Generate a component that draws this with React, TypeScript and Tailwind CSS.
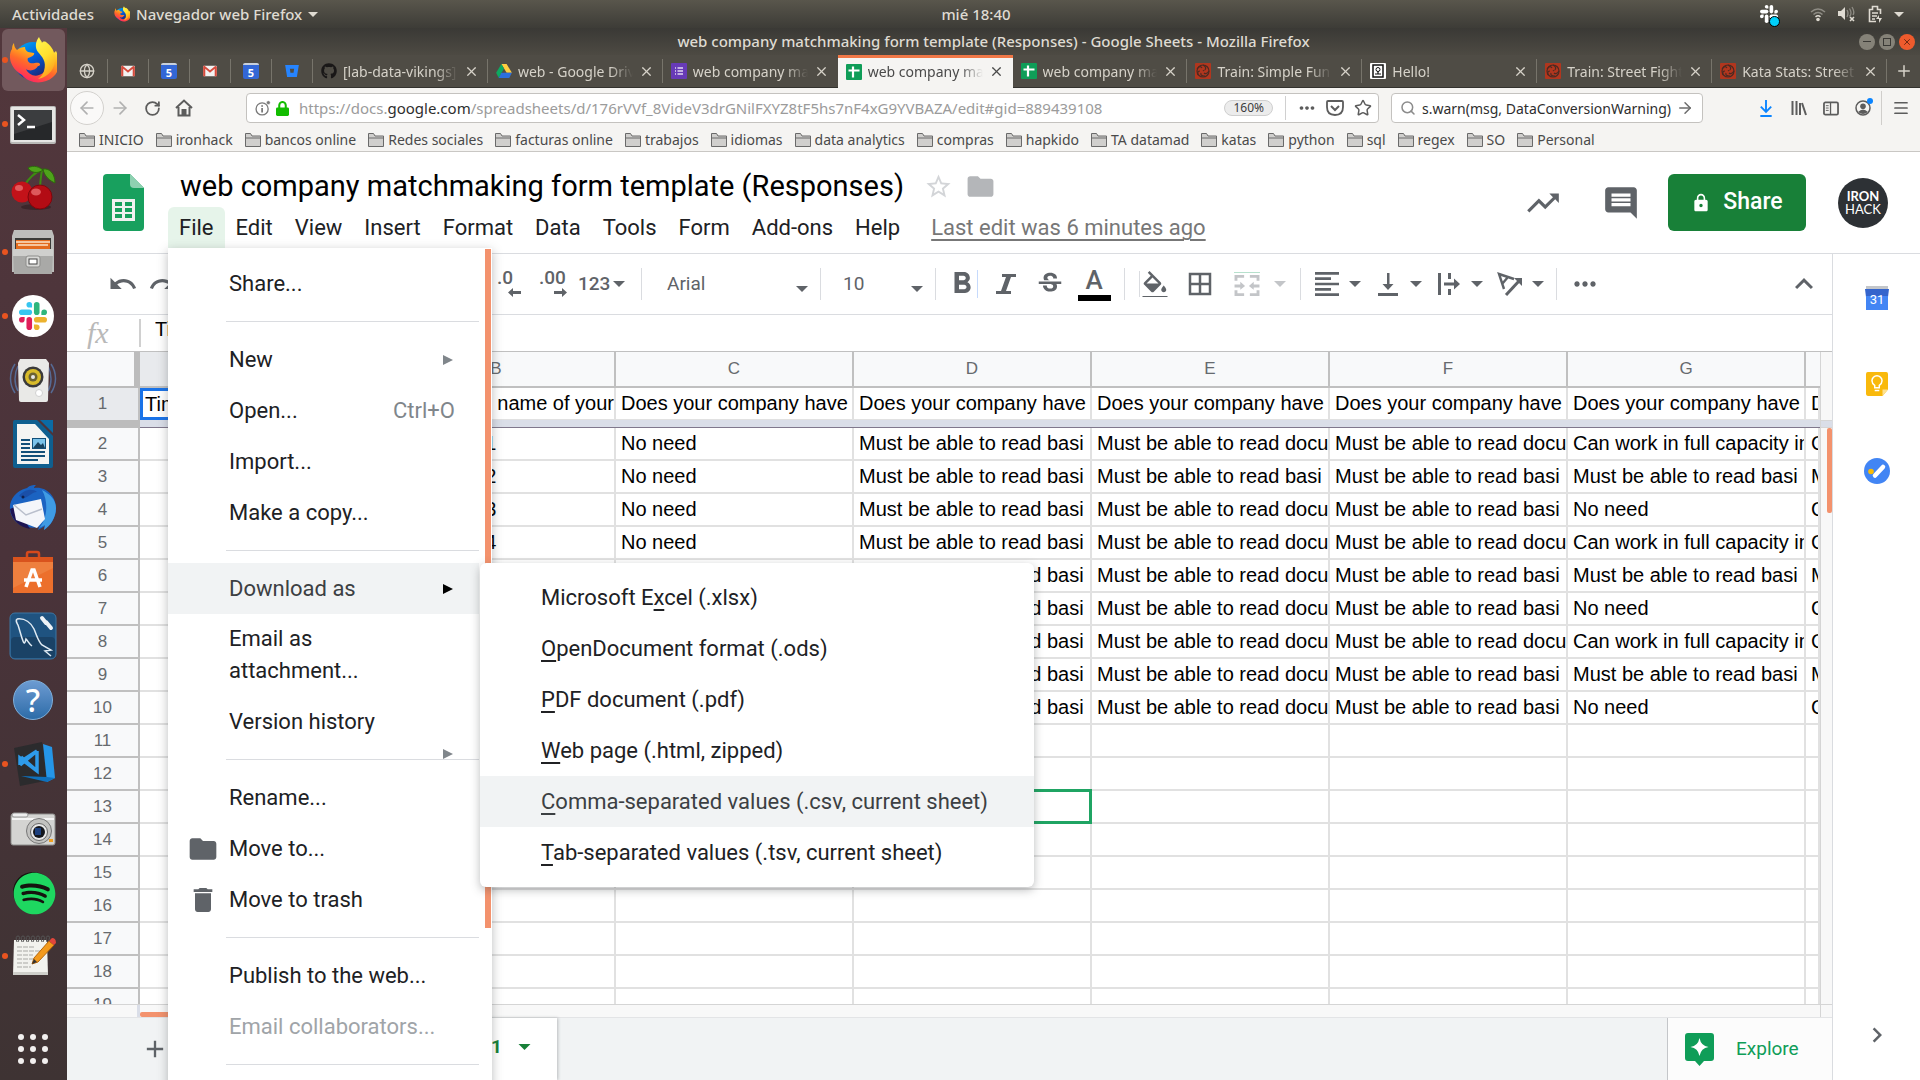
import React, { ReactNode } from "react";
import { ArrowLeft, ArrowRight, RotateCw, Search, Star, X, Plus, Globe, Menu } from "lucide-react";
import {
  MdUndo, MdRedo, MdFormatBold, MdStrikethroughS, MdFormatColorFill, MdBorderAll, MdFormatAlignLeft,
  MdMoreHoriz, MdKeyboardArrowUp, MdKeyboardArrowRight, MdFolder, MdDelete,
  MdStarBorder, MdTrendingUp, MdInsertComment, MdLock, MdAdd,
} from "react-icons/md";
import { FaGithub, FaSpotify } from "react-icons/fa";

const UI = "font-['Noto_Sans',sans-serif]";

/* ---------- logos ---------- */

function FirefoxLogo({ className }: { className: string }) {
  return (
    <svg viewBox="0 0 48 48" className={className} aria-hidden="true">
      <defs>
        <linearGradient id="ffFlame" x1="0.75" y1="0" x2="0.2" y2="1">
          <stop offset="0" stopColor="#fff44f" />
          <stop offset="0.3" stopColor="#ffb31c" />
          <stop offset="0.55" stopColor="#ff6a2a" />
          <stop offset="0.85" stopColor="#ff3255" />
          <stop offset="1" stopColor="#e31587" />
        </linearGradient>
        <linearGradient id="ffBlue" x1="0" y1="0" x2="0.6" y2="1">
          <stop offset="0" stopColor="#00b3f4" />
          <stop offset="0.5" stopColor="#0060df" />
          <stop offset="1" stopColor="#20246e" />
        </linearGradient>
        <linearGradient id="ffTail" x1="0.2" y1="0" x2="0.6" y2="1">
          <stop offset="0" stopColor="#fff44f" />
          <stop offset="0.5" stopColor="#ffe02e" />
          <stop offset="1" stopColor="#ff9a1c" />
        </linearGradient>
      </defs>
      <circle cx="24" cy="25" r="19" fill="url(#ffBlue)" />
      <path d="M5 7c0 3 1 5 3 7 2-2 5-3 8-3 0 2 1 4 3 5l6 1c1 2-3 4-6 5-1 2 0 4 2 5 4 1 6-1 9 0 2 1 1 3-1 3-2 4-8 6-12 3 2 5 8 8 13 6 7-2 10-9 8-16l9-8c5 10 4 20-3 26-9 8-24 7-31-2C0 31-1 19 3 13c0-3 1-5 2-6z" fill="url(#ffFlame)" />
      <path d="M30 1c-4 5-4 11-1 15 4 5 9 9 6 19-1 3-3 6-6 8 11-2 18-11 17-22-1-8-5-12-9-15-2-1-4 0-4 1 0-2-2-3-3-6z" fill="url(#ffTail)" />
    </svg>
  );
}

function SlackMark({ className, mono }: { className: string; mono?: boolean }) {
  const c = mono ? ["#fff", "#fff", "#fff", "#fff"] : ["#36c5f0", "#2eb67d", "#ecb22e", "#e01e5a"];
  return (
    <svg viewBox="0 0 30 30" className={className} aria-hidden="true">
      <g fill={c[0]}><rect x="0" y="8" width="14" height="6" rx="3" /><path d="M14 6V3a3 3 0 1 0-3 3z" /></g>
      <g fill={c[1]}><rect x="16" y="0" width="6" height="14" rx="3" /><path d="M24 14h3a3 3 0 1 0-3-3z" /></g>
      <g fill={c[2]}><rect x="16" y="16" width="14" height="6" rx="3" /><path d="M16 24v3a3 3 0 1 0 3-3z" /></g>
      <g fill={c[3]}><rect x="8" y="16" width="6" height="14" rx="3" /><path d="M6 16H3a3 3 0 1 0 3 3z" /></g>
    </svg>
  );
}

const dockIcons: { name: string; running?: boolean; active?: boolean; icon: ReactNode }[] = [
  { name: "Firefox", running: true, active: true, icon: <FirefoxLogo className="size-12" /> },
  {
    name: "Terminal", running: true,
    icon: (
      <svg viewBox="0 0 48 48" className="size-12">
        <rect x="1" y="6" width="46" height="38" rx="2" fill="#b9b9b7" />
        <rect x="2" y="7" width="44" height="35" rx="1" fill="#e6e6e4" />
        <rect x="5" y="10" width="38" height="30" fill="#26282a" />
        <path d="M5 10h38v12L5 34z" fill="#3b3d3f" />
        <path d="M9 15l6 5-6 5M18 27h8" stroke="#fff" strokeWidth="2.5" fill="none" />
      </svg>
    ),
  },
  {
    name: "CherryTree",
    icon: (
      <svg viewBox="0 0 48 48" className="size-12">
        <ellipse cx="27" cy="43" rx="15" ry="3" fill="#2e1c20" opacity=".6" />
        <path d="M15 22C20 14 25 9 32 6M31 26c0-8 1-14 2-20" stroke="#3d8a12" strokeWidth="2" fill="none" />
        <path d="M34 6C28 1 22 2 19 4c3 5 10 6 15 2zM34 5c7-1 12 5 12 14-5-2-11-7-12-14z" fill="#4ea31a" stroke="#2d6b0b" />
        <circle cx="13" cy="28" r="10.500" fill="#c31219" />
        <circle cx="31" cy="33" r="12" fill="#b30c14" stroke="#7f060c" />
        <ellipse cx="10" cy="24" rx="4" ry="3" fill="#f07a7a" opacity=".7" />
        <ellipse cx="27" cy="28" rx="5" ry="3.500" fill="#f07a7a" opacity=".7" />
      </svg>
    ),
  },
  {
    name: "Files", running: true,
    icon: (
      <svg viewBox="0 0 48 48" className="size-12">
        <path d="M5 2h38l2 6v36H3V8z" fill="#bdbdbb" />
        <rect x="6" y="10" width="36" height="12" fill="#3a3a38" />
        <path d="M7 12h34v10H7z" fill="#e36b1e" />
        <path d="M7 14h34M9 17h30" stroke="#fbe3c8" strokeWidth="1.500" />
        <path d="M4 21h40l-1 25H5z" fill="#a9a9a7" />
        <path d="M4 21h40v7H4z" fill="#cfcfcd" />
        <rect x="17" y="28" width="14" height="11" rx="2" fill="#d8d8d6" stroke="#8d8d8b" />
        <rect x="20" y="31" width="8" height="5" fill="#fff" stroke="#444" />
      </svg>
    ),
  },
  {
    name: "Slack", running: true,
    icon: <span className="grid size-[42px] place-items-center rounded-full bg-white"><SlackMark className="size-7" /></span>,
  },
  {
    name: "Rhythmbox",
    icon: (
      <svg viewBox="0 0 48 48" className="size-12">
        <path d="M6 8c-6 9-6 20 0 29M42 8c6 9 6 20 0 29M9 10c-4 8-4 18 0 25M39 10c4 8 4 18 0 25" stroke="#566a94" strokeWidth="1.500" fill="none" />
        <path d="M11 3h26l3 4-1 37q0 2-2 2H12q-2 0-2-2L9 7z" fill="#e9e9e7" />
        <circle cx="24" cy="21" r="10.500" fill="#3a3a3a" />
        <circle cx="24" cy="21" r="8" fill="#d8bb2a" />
        <circle cx="24" cy="21" r="4.500" fill="#6b6232" />
        <circle cx="24" cy="21" r="2" fill="#e8e8e8" />
        <circle cx="30" cy="37" r="3.500" fill="#fff" stroke="#d0d0d0" />
      </svg>
    ),
  },
  {
    name: "LibreOffice Writer",
    icon: (
      <svg viewBox="0 0 48 48" className="size-12">
        <path d="M6 0h22l16 16v30q0 2-2 2H6q-2 0-2-2V2q0-2 2-2z" fill="#0f5f8f" />
        <path d="M8 4h18l14 15v25H8z" fill="#f4f4f2" />
        <path d="M31 0h13v13z" fill="#0b6ba5" />
        <path d="M12 20h9M12 24h9M12 28h9M12 32h24M12 36h24M12 40h17" stroke="#134f78" strokeWidth="2" />
        <rect x="23" y="18" width="14" height="11" fill="#134f78" />
        <rect x="24" y="19" width="12" height="9" fill="#7cc3ea" />
        <path d="M24 28l5-6 3 3 2-2 2 5z" fill="#19425e" />
      </svg>
    ),
  },
  {
    name: "Thunderbird",
    icon: (
      <svg viewBox="0 0 48 48" className="size-12">
        <path d="M18 4c3-3 6-3 9-3-1 1-2 2-2 3 12-2 22 8 22 20 0 10-6 18-12 22l1-4-7 4 1-3C14 46 2 38 1 25 0 17 6 7 18 4z" fill="#1b63c2" />
        <path d="M33 6c8 4 14 10 14 18 0 10-6 18-12 22l1-5-6 3c8-8 10-26 3-38z" fill="#3f9be4" />
        <path d="M1 25c2 12 10 18 20 20L8 22z" fill="#1d1454" />
        <path d="M4 21l28-6 4 20-8 9L7 36z" fill="#f4f6fa" />
        <path d="M5 21l12 10 16-6" stroke="#b9bfcc" strokeWidth="1.500" fill="none" />
        <path d="M10 12c5-7 14-8 18-4-6 0-8 6-14 6z" fill="#1a4fa8" />
        <circle cx="14" cy="13" r="1.500" fill="#10204c" />
      </svg>
    ),
  },
  {
    name: "Ubuntu Software",
    icon: (
      <svg viewBox="0 0 48 48" className="size-12">
        <path d="M18 13V6q0-2 2-2h8q2 0 2 2v7" stroke="#d6491c" strokeWidth="2.500" fill="none" />
        <path d="M4 9h40v36H4z" fill="#ec6f2c" />
        <path d="M4 9h40v5H4z" fill="#d9531d" />
        <path d="M4 14h40v6L4 40z" fill="#f08a4b" opacity=".6" />
        <path d="M17 39l6-17h2l6 17M15 32h18" stroke="#fff" strokeWidth="3.500" fill="none" />
      </svg>
    ),
  },
  {
    name: "MySQL Workbench",
    icon: (
      <svg viewBox="0 0 48 48" className="size-12">
        <rect x="1" y="1" width="46" height="46" rx="5" fill="#1f5380" stroke="#3c76a3" />
        <rect x="2" y="25" width="44" height="21" rx="4" fill="#1a4266" />
        <path d="M8 7c8-1 14 4 17 10 3 7 4 12 8 16l9 5-6 1 6 5M8 7c-2 2 0 4 1 6 2 6 3 11 5 16 1 3 2 3 3-2 2 2 3 5 6 7" stroke="#dfeaf3" strokeWidth="1.500" fill="none" />
        <path d="M33 6l4 5M42 16l-5-6" stroke="#eef3f7" strokeWidth="4" strokeLinecap="round" />
      </svg>
    ),
  },
  {
    name: "Help",
    icon: (
      <span className={`${UI} grid size-10 place-items-center rounded-full border border-[#7fb0dc] bg-linear-to-b from-[#6c9bd2] to-[#2c6ca8] text-[32px] leading-none font-medium text-white`}>?</span>
    ),
  },
  {
    name: "Visual Studio Code", running: true,
    icon: (
      <svg viewBox="0 0 48 48" className="size-12">
        <path d="M5 8l28-6 8 38-30 6z" fill="#2b2b2d" />
        <path d="M34 4l9 3 3 31-8 4z" fill="#2596e8" />
        <path d="M12 36l26 1 8 1-8 4z" fill="#0f71bd" />
        <path d="M28 11v20L11 18v4l17-11M11 25l17-14M28 31L12 17" stroke="#2e9bea" strokeWidth="3.500" fill="none" />
      </svg>
    ),
  },
  {
    name: "Shotwell",
    icon: (
      <svg viewBox="0 0 48 48" className="size-12">
        <rect x="2" y="10" width="44" height="31" rx="2" fill="#d4d4d2" stroke="#8f8f8d" />
        <rect x="3" y="9" width="16" height="4" rx="2" fill="#eee" stroke="#999" />
        <path d="M3 15h42" stroke="#f5f5f5" strokeWidth="2" />
        <circle cx="30" cy="27" r="12.500" fill="#c2c2c0" stroke="#777" />
        <circle cx="30" cy="28" r="8.500" fill="#e8e8e8" stroke="#666" />
        <circle cx="30" cy="28" r="6" fill="#14161c" />
        <rect x="26" y="24" width="6" height="7" fill="#1d3f7d" />
        <rect x="40" y="35" width="4" height="3" fill="#f0a020" />
      </svg>
    ),
  },
  {
    name: "Spotify",
    icon: <span className="grid size-10 place-items-center rounded-full bg-[#16130f]"><FaSpotify className="size-[43px] shrink-0 text-[#1ed760]" /></span>,
  },
  {
    name: "gedit", running: true,
    icon: (
      <svg viewBox="0 0 48 48" className="size-12">
        <path d="M5 8h33l1 35H4z" fill="#f2f2ee" />
        <path d="M4 40h35v3H4z" fill="#cfcfca" />
        <path d="M8 10q-2-6 1-6t0 6m4 0q-2-6 1-6t0 6m4 0q-2-6 1-6t0 6m4 0q-2-6 1-6t0 6m4 0q-2-6 1-6t0 6m4 0q-2-6 1-6t0 6m4 0q-2-6 1-6t0 6" stroke="#555" fill="none" />
        <path d="M8 15h18M8 19h24M8 23h16M8 27h20M8 31h12M8 35h14" stroke="#a8a8a4" strokeDasharray="5 1" />
        <path d="M23 32l2-6L40 9l5 4-16 17z" fill="#f39a1d" stroke="#b5660b" />
        <path d="M40 9l3-3q4 0 4 5l-2 2z" fill="#e0463c" />
        <path d="M23 32l2-5 3 3z" fill="#333" />
      </svg>
    ),
  },
];

function Dock() {
  return (
    <nav aria-label="Dock" className="flex w-[67px] shrink-0 flex-col bg-linear-to-b from-[#52373c] via-[#4a333a] to-[#3e3333]">
      {dockIcons.map((d) => (
        <button key={d.name} aria-label={d.name} className="relative flex h-16 shrink-0 items-center justify-center pr-px">
          {d.active && <span className="absolute inset-x-0.5 top-px bottom-px rounded-md bg-[#72595d]" />}
          {d.running && <span className="absolute left-0.5 size-1.5 rounded-full bg-[#e95420]" />}
          <span className="relative">{d.icon}</span>
        </button>
      ))}
      <button aria-label="Show applications" className="mt-auto mb-4 grid grid-cols-3 gap-x-1.5 gap-y-1.5 self-center pr-px">
        {Array.from({ length: 9 }, (_, i) => <span key={i} className="size-1.5 rounded-full bg-[#f2f0ef]" />)}
      </button>
    </nav>
  );
}

/* ---------- system bar ---------- */

function Caret({ className = "" }: { className?: string }) {
  return <svg viewBox="0 0 12 6" className={`h-1.5 w-3 shrink-0 ${className}`} aria-hidden="true"><path d="M0 0h12L6 6z" fill="currentColor" /></svg>;
}

function SystemBar() {
  return (
    <header className={`${UI} grid h-7 shrink-0 grid-cols-3 items-center bg-linear-to-b from-[#59564c] to-[#3d3c37] px-3 text-[15px] font-medium text-[#dfdbd2]`}>
      <div className="flex items-center">
        <button>Actividades</button>
        <button className="ml-5 flex items-center gap-1.5">
          <FirefoxLogo className="size-4" />
          Navegador web Firefox
          <Caret className="h-[5px] w-[10px]" />
        </button>
      </div>
      <time className="ml-8 text-center">mié 18:40</time>
      <div className="flex items-center justify-end">
        <span className="relative mr-8"><SlackMark className="size-[18px]" mono /><span className="absolute -right-0.5 -bottom-1 size-[11px] rounded-full border border-black bg-[#00d0fb]" /></span>
        <svg viewBox="0 0 16 16" className="mr-3 size-4" fill="none" stroke="#8e8c84" strokeWidth="1.500">
          <path d="M1 6q7-6 14 0M3.500 8.500q4.500-4 9 0" /><path d="M5.500 10.800q2.500-2 5 0" stroke="#dfdbd2" /><circle cx="8" cy="13.500" r="1.800" fill="#dfdbd2" stroke="none" />
        </svg>
        <svg viewBox="0 0 18 16" className="mr-3 h-4 w-[18px]" fill="none" stroke="#8e8c84" strokeWidth="1.300">
          <path d="M0 5h3l4-4v13l-4-4H0z" fill="#dfdbd2" stroke="none" /><path d="M9 4q2 3 0 7M11.500 2.500q3 5 0 8M14 1q3 5 1 8" /><path d="M12 11l4 4M16 11l-4 4" stroke="#dfdbd2" strokeWidth="1.600" />
        </svg>
        <svg viewBox="0 0 14 18" className="mr-3 h-[18px] w-3.5" fill="none" stroke="#dfdbd2" strokeWidth="1.600">
          <path d="M8 16.500H1.500v-12h3v-3h5v3h3V9M4 8h6M4 11h5M4 14h3" /><path d="M11 10l-3 4h3v4l3-5h-3z" fill="#dfdbd2" stroke="none" />
        </svg>
        <Caret className="mr-1 h-[5px] w-[10px]" />
      </div>
    </header>
  );
}

/* ---------- Firefox chrome ---------- */

const GmailFav = () => (
  <svg viewBox="0 0 16 14" className="h-3 w-4"><rect y="1" width="16" height="12" rx="1" fill="#f2f2f2" /><path d="M0 2v11h2.500V4.500L8 9l5.500-4.500V13H16V2q-1-1.500-2.300-.6L8 6 2.300 1.400Q1-.5 0 2z" fill="#d54b3d" /></svg>
);
const CalFav = () => (
  <span className="flex h-4 w-4 items-center justify-center rounded-xs border-t-2 border-[#c8d0dc] bg-[#3367d6] text-[11px] leading-none font-bold text-white">5</span>
);
const BucketFav = () => (
  <svg viewBox="0 0 16 14" className="h-3 w-3.5"><path d="M0 0h16l-2.300 14H2.300zM5.500 4.500l.7 4.500h3.600l.7-4.500z" fill="#2684ff" fillRule="evenodd" /></svg>
);
const DriveFav = () => (
  <svg viewBox="0 0 18 16" className="h-3.5 w-4"><path d="M6 0h6l6 10h-6z" fill="#ffcd40" /><path d="M6 0l3 5-6 11-3-6z" fill="#0da960" /><path d="M6 10h12l-3 6H3z" fill="#2d6fdd" /></svg>
);
const FormFav = () => (
  <svg viewBox="0 0 16 16" className="size-4"><rect width="16" height="16" rx="1" fill="#673ab7" /><path d="M4 5h1M4 8h1M4 11h1M6.500 5H12M6.500 8H12M6.500 11H12" stroke="#e2d8f3" strokeWidth="1.300" /></svg>
);
const SheetFav = () => (
  <svg viewBox="0 0 16 16" className="size-4"><rect width="16" height="16" rx="1" fill="#0f9d58" /><path d="M2.500 6.500h11M7 2.500v11" stroke="#fff" strokeWidth="2.200" /></svg>
);
const KataFav = () => (
  <svg viewBox="0 0 16 16" className="size-4"><rect width="16" height="16" rx="1" fill="#b1361e" /><g fill="none" stroke="#4a2a22" strokeWidth="1.200"><circle cx="8" cy="8" r="6" /><path d="M8 2q4 2 2 5M14 8q-3 4-5 2M10 13q-5 0-4-3M3 12q-1-4 2-4M2 6q3-4 5-1M8 8q1-1 1 0" /></g></svg>
);
const HelloFav = () => (
  <svg viewBox="0 0 16 16" className="size-4"><rect width="16" height="16" rx="1" fill="#fff" /><rect x="3" y="2" width="10" height="12" fill="none" stroke="#111" strokeWidth="1.500" /><circle cx="8" cy="6.500" r="2" fill="none" stroke="#111" /><path d="M5 11h6M8 8v3" stroke="#111" strokeWidth="1.200" /></svg>
);

const pinned: ReactNode[] = [<Globe className="size-4" strokeWidth={2} />, <GmailFav />, <CalFav />, <GmailFav />, <CalFav />, <BucketFav />];
const tabs: { title: string; icon: ReactNode; active?: boolean }[] = [
  { title: "[lab-data-vikings] Lab", icon: <FaGithub className="size-4 text-[#191717]" /> },
  { title: "web - Google Drive", icon: <DriveFav /> },
  { title: "web company matchmaking", icon: <FormFav /> },
  { title: "web company matchmaking", icon: <SheetFav />, active: true },
  { title: "web company matchmaking", icon: <SheetFav /> },
  { title: "Train: Simple Fun", icon: <KataFav /> },
  { title: "Hello!", icon: <HelloFav /> },
  { title: "Train: Street Fighter", icon: <KataFav /> },
  { title: "Kata Stats: Street", icon: <KataFav /> },
];

function TabStrip() {
  return (
    <div role="tablist" className="flex h-[33px] shrink-0 border-b border-[#33322e] bg-[#4f4c45] text-[14px] text-[#d6d2c9]">
      {pinned.map((icon, i) => (
        <button key={i} role="tab" aria-label={`Pinned tab ${i + 1}`} className="flex w-[41px] shrink-0 items-center">
          <span className="flex flex-1 justify-center">{icon}</span>
          <span className="h-6 w-px bg-[#77746b]" />
        </button>
      ))}
      {tabs.map((t, i) => (
        <div
          key={i}
          role="tab"
          aria-selected={!!t.active}
          className={t.active ? "-mb-px flex min-w-0 flex-1 items-center border-t-[3px] border-[#f07746] bg-[#f5f4f2] pb-[3px] pl-2 text-[#4a4a4a]" : "flex min-w-0 flex-1 items-center pl-2"}
        >
          <span className="w-4 shrink-0">{t.icon}</span>
          <span className="ml-1.5 min-w-0 flex-1 overflow-hidden mask-r-from-80% whitespace-nowrap">{t.title}</span>
          <button aria-label="Close tab" className="ml-1.5"><X className="size-[15px]" strokeWidth={2} /></button>
          <span className={t.active || i === 2 ? "ml-2 h-6 w-px" : "ml-2 h-6 w-px bg-[#77746b]"} />
        </div>
      ))}
      <button aria-label="New tab" className="flex w-[33px] shrink-0 items-center justify-center"><Plus className="size-[18px]" /></button>
    </div>
  );
}

function NavBar() {
  return (
    <div className="flex h-10 shrink-0 items-center bg-[#f5f4f2] text-[#5c5c5c]">
      <button aria-label="Back" className="ml-[3px] grid size-[34px] place-items-center rounded-full border border-[#d3d1ce] bg-[#faf9f8] text-[#b1b1b1]"><ArrowLeft className="size-5" /></button>
      <button aria-label="Forward" className="ml-1.5 grid size-5 place-items-center text-[#b1b1b1]"><ArrowRight className="size-5" /></button>
      <button aria-label="Reload" className="ml-3 grid size-5 place-items-center"><RotateCw className="size-[17px]" strokeWidth={2.5} /></button>
      <button aria-label="Home" className="ml-3 grid size-5 place-items-center">
        <svg viewBox="0 0 18 18" className="size-[18px]" fill="none" stroke="currentColor" strokeWidth="2"><path d="M1 9l8-7.500L17 9M3.500 8v8.500h11V8" /><path d="M7.500 16v-5h3v5z" fill="currentColor" /></svg>
      </button>
      <div className="ml-[52px] flex h-[30px] min-w-0 flex-1 items-center rounded-[4px] border border-[#c4c2bf] bg-white pl-2">
        <svg viewBox="0 0 18 18" className="size-4 shrink-0" fill="none" stroke="#7a7a7a" strokeWidth="1.500"><circle cx="8" cy="10" r="6.800" /><path d="M8 9v5M8 6v1.500" strokeWidth="2" /><circle cx="15" cy="3" r="2.200" fill="#7a7a7a" stroke="#fff" strokeWidth=".6" /></svg>
        <svg viewBox="0 0 14 16" className="ml-[5px] h-[15px] w-[13px] shrink-0"><path d="M3.500 8V4.500a3.500 3.500 0 0 1 7 0V8" stroke="#12bc00" strokeWidth="2.200" fill="none" /><rect x="0" y="7" width="14" height="9" rx="1.500" fill="#12bc00" /></svg>
        <p className="ml-2.5 min-w-0 flex-1 truncate text-[15px] text-[#9b9b9b]">
          https://docs.<span className="text-[#2e2e2e]">google.com</span>/spreadsheets/d/176rVVf_8VideV3drGNilFXYZ8tF5hs7nF4xG9YVBAZA/edit#gid=889439108
        </p>
        <button className="rounded-full border border-[#cfcfcf] bg-[#ececec] px-2 text-[12px] leading-[14px] text-[#3c3c3c]">160%</button>
        <span className="ml-3 h-6 w-px bg-[#d0d0d0]" />
        <button aria-label="Page actions" className="ml-2.5"><MdMoreHoriz className="size-[22px]" /></button>
        <button aria-label="Save to Pocket" className="ml-2">
          <svg viewBox="0 0 18 16" className="h-4 w-[18px]" fill="none" stroke="currentColor" strokeWidth="1.800"><path d="M2 1h14q1 0 1 1v5q0 8-8 8T1 7V2q0-1 1-1z" /><path d="M5 6l4 4 4-4" strokeWidth="2" /></svg>
        </button>
        <button aria-label="Bookmark page" className="mr-1.5 ml-2.5"><Star className="size-[18px]" /></button>
      </div>
      <form className="ml-3 flex h-[30px] w-[312px] shrink-0 items-center rounded-[4px] border border-[#c4c2bf] bg-white px-2">
        <Search className="size-4 shrink-0 text-[#8c8c8c]" strokeWidth={2.3} />
        <input aria-label="Search" defaultValue="s.warn(msg, DataConversionWarning)" className="ml-1.5 min-w-0 flex-1 bg-transparent text-[14px] text-[#2e2e2e] outline-none" />
        <button aria-label="Go" type="button"><ArrowRight className="size-[18px] text-[#6c6c6c]" /></button>
      </form>
      <button aria-label="Downloads" className="ml-14 text-[#0a84ff]"><svg viewBox="0 0 14 18" className="h-[17px] w-3.5" fill="none" stroke="currentColor" strokeWidth="2"><path d="M7 0v12M1.500 7L7 12.500 12.500 7M1 17h12" /></svg></button>
      <button aria-label="Library" className="ml-[18px]"><svg viewBox="0 0 16 16" className="size-4" fill="none" stroke="currentColor" strokeWidth="2"><path d="M1.500 1v14M5.500 1v14M9 3v12M11 3l4 12" /></svg></button>
      <button aria-label="Sidebars" className="ml-4"><svg viewBox="0 0 17 16" className="h-[15px] w-4" fill="none" stroke="currentColor" strokeWidth="1.900"><rect x="1" y="1.500" width="15" height="13" rx="1.500" /><path d="M8 2v12" strokeWidth="1.400" /><path d="M3 5h3M3 7.500h3M3 10h3" strokeWidth="1" /></svg></button>
      <button aria-label="Account" className="relative ml-4"><svg viewBox="0 0 16 16" className="size-4"><circle cx="8" cy="8" r="7" fill="none" stroke="currentColor" strokeWidth="1.500" /><circle cx="8" cy="6.200" r="2.800" fill="currentColor" /><path d="M3 12q5-5 10 0-5 4-10 0z" fill="currentColor" /></svg><span className="absolute -top-0.5 -right-0.5 size-[6px] rounded-full bg-[#0a84ff]" /></button>
      <span className="ml-2.5 h-[34px] w-px bg-[#d0cecb]" />
      <button aria-label="Menu" className="mr-2.5 ml-2.5"><Menu className="size-[18px]" strokeWidth={2.3} /></button>
    </div>
  );
}

const bookmarks = ["INICIO", "ironhack", "bancos online", "Redes sociales", "facturas online", "trabajos", "idiomas", "data analytics", "compras", "hapkido", "TA datamad", "katas", "python", "sql", "regex", "SO", "Personal"];

function BookmarkBar() {
  return (
    <ul className="flex h-6 shrink-0 items-center gap-3 border-b border-[#c9c7c4] bg-[#f5f4f2] pl-3 text-[14px] leading-none text-[#4a4a4a]">
      {bookmarks.map((b) => (
        <li key={b}>
          <a href="#" className="flex items-center gap-1 whitespace-nowrap">
            <svg viewBox="0 0 16 14" className="h-3.5 w-4"><path d="M.5 13.500V.5h5l1.500 2.500h8.500v10.500z" fill="#d0cfcd" stroke="#6a6a6a" /><path d="M.5 5h15" stroke="#6a6a6a" /></svg>
            {b}
          </a>
        </li>
      ))}
    </ul>
  );
}

/* ---------- Sheets ---------- */

type Entry = { label: string; shortcut?: string; arrow?: boolean; active?: boolean; icon?: ReactNode; disabled?: boolean; low?: boolean };
const fileGroups: Entry[][] = [
  [{ label: "Share..." }],
  [{ label: "New", arrow: true }, { label: "Open...", shortcut: "Ctrl+O" }, { label: "Import..." }, { label: "Make a copy..." }],
  [{ label: "Download as", arrow: true, active: true }, { label: "Email as attachment..." }, { label: "Version history", arrow: true, low: true }],
  [{ label: "Rename..." }, { label: "Move to...", icon: <MdFolder className="size-8" /> }, { label: "Move to trash", icon: <MdDelete className="size-8" /> }],
  [{ label: "Publish to the web..." }, { label: "Email collaborators...", disabled: true }],
];

function RightArrow({ className }: { className: string }) {
  return <svg viewBox="0 0 10 10" className={className} aria-hidden="true"><path d="M0 0l10 5-10 5z" fill="currentColor" /></svg>;
}

const formats: [string, string, string][] = [
  ["Microsoft E", "x", "cel (.xlsx)"],
  ["", "O", "penDocument format (.ods)"],
  ["", "P", "DF document (.pdf)"],
  ["", "W", "eb page (.html, zipped)"],
  ["", "C", "omma-separated values (.csv, current sheet)"],
  ["", "T", "ab-separated values (.tsv, current sheet)"],
];

function DownloadMenu() {
  return (
    <div role="menu" aria-label="Download as" className="absolute top-0 left-full ml-px w-[554px] rounded-md bg-white py-[9px] whitespace-nowrap shadow-[0_3px_10px_rgba(60,64,67,0.35)]">
      {formats.map(([a, u, b]) => (
        <button key={u} role="menuitem" className={u === "C" ? "flex h-[51px] w-full items-center bg-[#f1f3f4] pl-[61px] text-[#3c4043]" : "flex h-[51px] w-full items-center pl-[61px]"}>
          <span>{a}<span className="underline underline-offset-4">{u}</span>{b}</span>
        </button>
      ))}
    </div>
  );
}

function FileMenu() {
  return (
    <div role="menu" aria-label="File" className="absolute top-full left-0 z-20 w-[324px] bg-white pt-2.5 pb-8 text-[22px] leading-8 text-[#202124] shadow-[0_3px_10px_rgba(60,64,67,0.35)]">
      {fileGroups.map((group, g) => (
        <div key={g} role="group">
          {group.map((e) => (
            <div key={e.label} className="relative mr-[13px]">
              <button
                role="menuitem"
                disabled={e.disabled}
                className={
                  e.active
                    ? "flex min-h-[51px] w-full items-center bg-[#f1f3f4] pr-6 text-left text-[#3c4043]"
                    : e.disabled
                      ? "flex min-h-[51px] w-full items-center pr-6 text-left text-[#a0a4a8]"
                      : "flex min-h-[51px] w-full items-center py-[9px] pr-6 text-left"
                }
              >
                <span className="flex w-[61px] shrink-0 items-center justify-center pl-2 text-[#5f6368]">{e.icon}</span>
                <span className={e.label.startsWith("Email as") ? "w-36" : "flex-1 whitespace-nowrap"}>{e.label}</span>
                {e.shortcut && <span className="text-[#80868b]">{e.shortcut}</span>}
                {e.arrow && !e.low && <RightArrow className={e.active ? "mr-[2px] size-2.5 text-black" : "mr-[2px] size-2.5 text-[#80868b]"} />}
              </button>
              {e.low && <RightArrow className="absolute right-[26px] -bottom-3 size-2.5 text-[#80868b]" />}
              {e.active && <DownloadMenu />}
            </div>
          ))}
          <hr className="mt-3 mr-[13px] mb-3 ml-[58px] border-[#dadce0]" />
        </div>
      ))}
      <span className="absolute top-px right-px -z-10 h-[679px] w-1.5 bg-[#f3926d]" />
    </div>
  );
}

function DocHeader() {
  return (
    <div className="flex h-[102px] shrink-0 items-start border-b border-[#dadce0] bg-white">
      <svg viewBox="0 0 41 57" className="mt-[22px] ml-9 h-[57px] w-[41px] shrink-0">
        <path d="M4 0h23l14 14v39q0 4-4 4H4q-4 0-4-4V4q0-4 4-4z" fill="#18a05e" />
        <path d="M27 0l14 14H31q-4 0-4-4z" fill="#8ed1b1" />
        <path d="M9 25h23v22H9zM12 28v4h7v-4zM22 28v4h7v-4zM12 34v4h7v-4zM22 34v4h7v-4zM12 40v4h7v-4zM22 40v4h7v-4z" fill="#f1f1f1" fillRule="evenodd" />
      </svg>
      <div className="mt-3.5 ml-6 min-w-0 flex-1 font-[Roboto,sans-serif]">
        <div className="flex h-[41px] items-center pl-3">
          <h1 className="text-[29px] leading-none whitespace-nowrap text-black">web company matchmaking form template (Responses)</h1>
          <button aria-label="Star" className="ml-5"><MdStarBorder className="size-[29px] text-[#d3d5d8]" /></button>
          <button aria-label="Move to folder" className="ml-3"><MdFolder className="size-[31px] text-[#b4b6b9]" /></button>
        </div>
        <div role="menubar" className="flex h-[41px] items-stretch text-[22px] text-[#202124]">
          <div className="relative flex">
            <button role="menuitem" aria-expanded="true" className="rounded-t-md bg-[#e6f4ea] px-[11px]">File</button>
            <FileMenu />
          </div>
          {["Edit", "View", "Insert", "Format", "Data", "Tools", "Form", "Add-ons", "Help"].map((m) => (
            <button key={m} role="menuitem" className="px-[11px]">{m}</button>
          ))}
          <a href="#" className="ml-5 self-center whitespace-nowrap text-[#777] underline underline-offset-4">Last edit was 6 minutes ago</a>
        </div>
      </div>
      <div className="mr-8 flex h-full items-center gap-9 font-[Roboto,sans-serif]">
        <button aria-label="Activity" className="mr-1"><MdTrendingUp className="size-[38px] text-[#5f6368]" /></button>
        <button aria-label="Comments"><MdInsertComment className="size-[38px] text-[#5f6368]" /></button>
        <button className="-ml-2 flex h-[57px] w-[138px] items-center justify-center gap-3 rounded-md bg-[#188038] text-[23px] font-medium text-white"><MdLock className="size-5" />Share</button>
        <button aria-label="Account" className="-ml-1 flex size-[50px] flex-col items-center justify-center rounded-full bg-[#2d3135] font-[Lato,sans-serif] text-[13px] leading-[13px] text-white"><b>IRON</b><span>HACK</span></button>
      </div>
    </div>
  );
}

const Sep = ({ className = "" }: { className?: string }) => <span className={`h-8 w-px shrink-0 bg-[#dadce0] ${className}`} />;

function Decimals({ text, flip }: { text: string; flip?: boolean }) {
  return (
    <button aria-label={flip ? "Increase decimal places" : "Decrease decimal places"} className="flex h-9 w-[42px] shrink-0 flex-col items-start pl-[7px] text-[19px] leading-6 font-medium">
      {text}
      <svg viewBox="0 0 13 9" className={flip ? "-mt-0.5 ml-[15px] h-[9px] w-[13px] -scale-x-100" : "-mt-0.5 ml-[11px] h-[9px] w-[13px]"}><path d="M0 4.500L5 0v3h8v3H5v3z" fill="currentColor" /></svg>
    </button>
  );
}

function ToolbarSelect({ label, value, className }: { label: string; value: string; className: string }) {
  return (
    <div className={`relative flex h-8 shrink-0 items-center ${className}`}>
      <select aria-label={label} defaultValue={value} className="size-full appearance-none bg-transparent pl-[inherit] text-[19px] outline-none"><option>{value}</option></select>
      <Caret className="pointer-events-none absolute right-3 bottom-2" />
    </div>
  );
}

const splitTools: { name: string; icon: ReactNode }[] = [
  { name: "Horizontal align", icon: <MdFormatAlignLeft className="size-8" /> },
  { name: "Vertical align", icon: <svg viewBox="0 0 20 24" className="h-6 w-5"><path d="M9 1h2.500v11h4L10 18l-5.500-6H9zM0 21h20v3H0z" fill="currentColor" /></svg> },
  { name: "Text wrapping", icon: <svg viewBox="0 0 24 24" className="size-6"><path d="M1 1h3v22H1zM11 1h3v6h-3zM11 17h3v6h-3zM7 10.500h10V6.500l6 5.500-6 5.500v-4H7z" fill="currentColor" /></svg> },
  { name: "Text rotation", icon: <svg viewBox="0 0 26 24" className="h-6 w-[26px]" fill="none" stroke="currentColor" strokeWidth="2.400"><path d="M7 17L2 2l15 5M5.500 11.500L11 5" /><path d="M9 23L22 9" strokeWidth="3" /><path d="M17 6h8v8z" fill="currentColor" stroke="none" /></svg> },
];

function Toolbar() {
  return (
    <div role="toolbar" className="flex h-[61px] shrink-0 items-center border-b border-[#dadce0] bg-white font-[Roboto,sans-serif] text-[#5f6368]">
      <button aria-label="Undo" className="ml-9 flex w-10 shrink-0 justify-center"><MdUndo className="size-[30px]" /></button>
      <button aria-label="Redo" className="mr-[307px] flex w-10 shrink-0 justify-center"><MdRedo className="size-[30px]" /></button>
      <Decimals text=".0" />
      <Decimals text=".00" flip />
      <button className="flex w-[60px] shrink-0 items-center gap-[3px] pl-1 text-[19px] font-medium">123<Caret /></button>
      <Sep className="ml-[7px]" />
      <ToolbarSelect label="Font" value="Arial" className="w-[178px] pl-[25px] [&>select]:pl-0" />
      <Sep />
      <ToolbarSelect label="Font size" value="10" className="w-[114px] pl-[22px] [&>select]:pl-0" />
      <Sep />
      <button aria-label="Bold" className="relative ml-1 flex w-11 shrink-0 justify-center"><MdFormatBold className="size-9" /><span className="absolute top-1 right-1.5 h-7 w-px bg-[#c6dafc]" /></button>
      <button aria-label="Italic" className="flex w-11 shrink-0 justify-center"><svg viewBox="0 0 20 20" className="size-5"><path d="M6 0h14v3h-5l-5 14h5v3H0v-3h5l5-14H6z" fill="currentColor" /></svg></button>
      <button aria-label="Strikethrough" className="flex w-11 shrink-0 justify-center"><MdStrikethroughS className="size-[30px]" /></button>
      <button aria-label="Text color" className="flex w-11 shrink-0 flex-col items-center text-[26px] leading-[26px] font-medium">A<span className="mt-0.5 h-1.5 w-[33px] bg-black" /></button>
      <Sep className="ml-2" />
      <button aria-label="Fill color" className="ml-1.5 flex w-[46px] shrink-0 justify-center"><span className="h-[26px] overflow-hidden border-l border-[#dadce0]"><MdFormatColorFill className="size-[30px]" /></span></button>
      <button aria-label="Borders" className="flex w-[45px] shrink-0 justify-center"><MdBorderAll className="size-[30px]" /></button>
      <button aria-label="Merge cells" className="flex w-[66px] shrink-0 items-center text-[#c3c5c8]">
        <svg viewBox="0 0 26 24" className="mr-[14px] ml-[12px] h-6 w-[26px] border-t border-[#b7e1cd]"><path d="M0 2h10v3H3v3H0zM16 2h10v6h-3V5h-7zM0 18h3v3h7v3H0zM23 18h3v6H16v-3h7zM0 12h6V9l5 4.500-5 4V15H0zM26 12h-6V9l-5 4.500 5 4V15h6z" fill="currentColor" /></svg>
        <Caret />
      </button>
      <Sep className="ml-3" />
      <div className="ml-1 flex">
        {splitTools.map((t) => (
          <button key={t.name} aria-label={t.name} className="flex w-[61px] shrink-0 items-center">
            <span className="flex w-11 justify-center">{t.icon}</span>
            <Caret />
          </button>
        ))}
      </div>
      <Sep className="ml-[7px]" />
      <button aria-label="More" className="ml-2 flex w-10 shrink-0 justify-center"><MdMoreHoriz className="size-8" /></button>
      <button aria-label="Hide the menus" className="mr-2 ml-auto flex w-10 shrink-0 justify-center"><MdKeyboardArrowUp className="size-9" /></button>
    </div>
  );
}

const basic = "Must be able to read basi";
const docs = "Must be able to read documentation";
const full = "Can work in full capacity in";
const none = "No need";
const question = "Does your company have";
const body: string[][] = [
  [docs, docs, full, "C"],
  [basic, basic, basic, "M"],
  [docs, basic, none, "C"],
  [docs, docs, full, "C"],
  [docs, basic, basic, "M"],
  [docs, basic, none, "C"],
  [docs, docs, full, "C"],
  [docs, basic, basic, "M"],
  [docs, basic, none, "C"],
].map((r, i) => ["", `Company #${i + 1}`, none, basic, ...r]);

function Grid() {
  const num = "border-r-2 border-b-2 border-[#c0c0c0] bg-[#f8f9fa] p-0 text-center text-[17px] font-normal text-[#666a6e]";
  return (
    <table className="w-full table-fixed border-separate border-spacing-0 font-['Liberation_Sans',sans-serif] text-[20px] leading-[30px] text-black">
      <colgroup>
        <col className="w-[73px]" />
        {"ABCDEFG".split("").map((c) => <col key={c} className="w-[238px]" />)}
        <col />
      </colgroup>
      <thead>
        <tr className="h-9">
          <th className="border-r-[6px] border-b-2 border-[#bcbcbc] bg-[#f8f9fa] p-0" />
          {"ABCDEFG".split("").map((c) => (
            <th key={c} scope="col" className={c === "A" ? "border-r-2 border-b-2 border-[#c0c0c0] bg-[#e8eaed] p-0" : num}>{c === "A" ? "" : c}</th>
          ))}
          <th className="border-b-2 border-[#c0c0c0] bg-[#f8f9fa]" />
        </tr>
        <tr className="h-8">
          <th scope="row" className="border-r-2 border-[#c0c0c0] bg-[#e8eaed] p-0 text-center text-[17px] font-normal text-[#666a6e]">1</th>
          {["Timestamp", "What is the name of your", question, question, question, question, question, "D"].map((v, i) => (
            <td key={i} className={i === 0 ? "border-[3px] border-[#1a73e8] p-0" : "border-r-2 border-b border-[#e1e1e1] p-0"}>
              <div className={i === 0 ? "h-[26px] overflow-hidden pl-0.5 leading-[27px] whitespace-nowrap" : i === 1 ? "h-[31px] overflow-hidden text-right leading-[31px] whitespace-nowrap" : "h-[31px] overflow-hidden pl-[5px] leading-[31px] whitespace-nowrap"}>{v}</div>
            </td>
          ))}
        </tr>
        <tr className="h-2">
          <td className="bg-[#bcbcbc] p-0" />
          <td colSpan={8} className="border-b border-[#80788c] bg-[#dadee8] p-0" />
        </tr>
      </thead>
      <tbody>
        {Array.from({ length: 18 }, (_, r) => (
          <tr key={r} className="h-[33px]">
            <th scope="row" className={num}>{r + 2}</th>
            {Array.from({ length: 8 }, (_, c) => (
              <td key={c} className="relative border-r-2 border-b-2 border-[#e1e1e1] p-0">
                <div className="h-[31px] overflow-hidden pl-[5px] leading-[31px] whitespace-nowrap">{body[r]?.[c] ?? ""}</div>
                {r === 11 && c === 3 && <span className="absolute -inset-0.5 border-[3px] border-[#1fa463]" />}
              </td>
            ))}
          </tr>
        ))}
      </tbody>
    </table>
  );
}

function Sheet() {
  return (
    <main className="flex min-w-0 flex-1 flex-col">
      <Toolbar />
      <div className="flex h-[37px] shrink-0 items-center border-b border-[#c0c0c0] bg-white">
        <span className="w-[72px] pl-5 font-['Liberation_Serif',serif] text-[30px] leading-none text-[#b9b9b9] italic">fx</span>
        <span className="h-7 w-0.5 bg-[#d0d0d0]" />
        <input aria-label="Formula" defaultValue="Timestamp" className="ml-3.5 h-8 flex-1 pb-2 font-['Liberation_Sans',sans-serif] text-[20px] text-black outline-none" />
      </div>
      <div className="flex min-h-0 flex-1">
        <div className="min-w-0 flex-1 overflow-hidden"><Grid /></div>
        <div className="flex w-3 shrink-0 flex-col border-l border-[#d5d5d5] bg-[#f8f8f8]">
          <div className="mt-[68px] h-2 border-y border-[#d5d5d5] bg-[#dadee8]" />
          <div className="ml-auto h-[85px] w-[5px] rounded-xs bg-[#f3926d]" />
        </div>
      </div>
      <div className="flex h-[13px] shrink-0 border-t border-[#d5d5d5] bg-[#f8f8f8]">
        <span className="ml-[70px] w-[3px] bg-[#dadee8]" />
        <span className="mt-[7px] h-[5px] w-[300px] rounded-xs bg-[#f3926d]" />
        <span className="ml-auto mr-[11px] w-px bg-[#d5d5d5]" />
      </div>
      <footer className="flex h-[63px] shrink-0 border-t border-[#e3e4e6] bg-[#f1f3f4] font-[Roboto,sans-serif]">
        <button aria-label="Add sheet" className="ml-[74px] flex w-7 items-center justify-center"><MdAdd className="size-7 text-[#5f6368]" /></button>
        <button className="ml-auto flex w-[240px] items-center justify-end gap-4 bg-white pr-[26px] pb-1 text-[19px] font-bold text-[#188038] shadow-[1px_0_3px_rgba(60,64,67,0.3)]">Form Responses 1<Caret className="w-[13px]" /></button>
        <span className="w-[1110px] shrink" />
        <button className="flex w-[165px] shrink-0 items-center border-l border-[#c4c6c9] bg-[#fcfcfc] pl-[17px] text-[19px] text-[#0f9d58]">
          <svg viewBox="0 0 29 33" className="mr-[22px] h-[33px] w-[29px]"><path d="M3 0h23q3 0 3 3v22q0 3-3 3h-7l-4.500 5-4.500-5H3q-3 0-3-3V3q0-3 3-3z" fill="#0f9d58" /><path d="M14.500 5q1.500 8 9 9-7.500 1-9 9-1.500-8-9-9 7.500-1 9-9z" fill="#fff" /></svg>
          Explore
        </button>
      </footer>
    </main>
  );
}

function SidePanel() {
  return (
    <aside className="flex w-[88px] shrink-0 flex-col items-center border-l border-[#dadce0] bg-white pt-8">
      <button aria-label="Calendar" className="mb-[62px]">
        <svg viewBox="0 0 24 24" className="size-6"><path d="M1 0h22v5H1z" fill="#c3c6ca" /><path d="M0 3h24l-1 8H1z" fill="#3464cc" /><path d="M1 10h22v14H1z" fill="#4285f4" /><text x="12" y="18" textAnchor="middle" fontSize="13" fontFamily="Roboto" fill="#fff">31</text></svg>
      </button>
      <button aria-label="Keep" className="mb-[62px]">
        <svg viewBox="0 0 24 26" className="h-6 w-[22px]"><path d="M2 0h20q2 0 2 2v17l-6 7H2q-2 0-2-2V2q0-2 2-2z" fill="#f9b90c" /><path d="M24 19h-6v7z" fill="#fde293" /><path d="M9.500 17v-2.500q-3-2-3-5a5.500 5.500 0 0 1 11 0q0 3-3 5V17zM9.500 20h5" stroke="#fff" strokeWidth="1.600" fill="none" /></svg>
      </button>
      <button aria-label="Tasks">
        <svg viewBox="0 0 26 26" className="size-[26px]"><circle cx="13" cy="13" r="13" fill="#4285f4" /><path d="M11 17.500L19 9" stroke="#fff" strokeWidth="4.500" strokeLinecap="round" /><circle cx="7" cy="13.500" r="2.800" fill="#fbbc04" /></svg>
      </button>
      <button aria-label="Hide side panel" className="mt-auto mb-[30px]"><MdKeyboardArrowRight className="size-[30px] text-[#5f6368]" /></button>
    </aside>
  );
}

export default function App() {
  return (
    <div className="flex h-screen flex-col overflow-hidden bg-white">
      <SystemBar />
      <div className="flex min-h-0 flex-1">
        <Dock />
        <div className={`${UI} flex min-w-0 flex-1 flex-col`}>
          <div className="relative flex h-[27px] shrink-0 items-center justify-center bg-linear-to-b from-[#3a3935] to-[#4d4a43] text-[15px] font-medium text-[#dfdbd2]">
            web company matchmaking form template (Responses) - Google Sheets - Mozilla Firefox
            <div className="absolute right-[5px] flex gap-1">
              <button aria-label="Minimize" className="grid size-4 place-items-center rounded-full bg-[#858278]"><span className="h-px w-2 bg-[#3a3935]" /></button>
              <button aria-label="Maximize" className="grid size-4 place-items-center rounded-full bg-[#858278]"><span className="size-2 border border-[#3a3935]" /></button>
              <button aria-label="Close" className="grid size-4 place-items-center rounded-full bg-[#ef5b2d]"><X className="size-2.5 text-[#5a1f0c]" /></button>
            </div>
          </div>
          <TabStrip />
          <NavBar />
          <BookmarkBar />
          <DocHeader />
          <div className="flex min-h-0 flex-1">
            <Sheet />
            <SidePanel />
          </div>
        </div>
      </div>
    </div>
  );
}
